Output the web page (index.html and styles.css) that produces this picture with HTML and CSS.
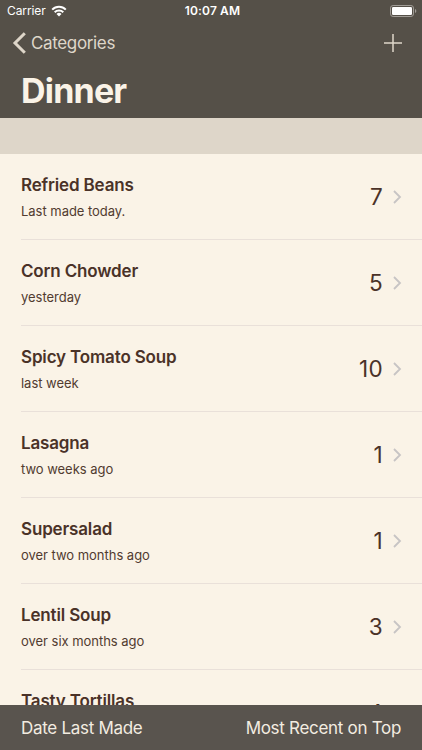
FILE: index.html
```
<!DOCTYPE html>
<html lang="en">
<head>
    <meta charset="UTF-8">
    <meta name="viewport" content="width=device-width, initial-scale=1.0">
    <title>Dinner</title>
    <link rel="stylesheet" href="styles.css">
</head>

<body>
    <div class="app">
        <header class="header">
            <!-- Status bar -->
            <div class="status-bar">
                <div class="carrier">
                    <span>Carrier</span>
                    <svg width="16" height="12" viewBox="0 0 16 12" fill="none" stroke="#fff" stroke-width="2">
                        <path d="M1.2 4.6a9.6 9.6 0 0 1 13.6 0"/>
                        <path d="M3.7 7.2a6.1 6.1 0 0 1 8.6 0"/>
                        <path d="M8 11.6L5.5 9.1a3.5 3.5 0 0 1 5 0z" fill="#fff" stroke="none"/>
                    </svg>
                </div>
                <div class="clock">10:07 AM</div>
                <svg class="battery" width="27" height="12" viewBox="0 0 27 12">
                    <rect x="0.5" y="0.5" width="23" height="11" rx="2.6" fill="none" stroke="#a19d97"/>
                    <rect x="2" y="2" width="20" height="8" rx="1.2" fill="#fff"/>
                    <path d="M25 4c1.8.6 1.8 3.4 0 4z" fill="#a19d97"/>
                </svg>
            </div>

            <!-- Navigation -->
            <nav class="nav-bar">
                <a class="back">
                    <svg width="14" height="22" viewBox="0 0 14 22" fill="none" stroke="#ded6c9" stroke-width="3">
                        <path d="M12.8 1.2L3 11l9.8 9.8"/>
                    </svg>
                    <span>Categories</span>
                </a>
                <svg width="18" height="18" viewBox="0 0 18 18" stroke="#ded6c9" stroke-width="1.5">
                    <path d="M9 0v18M0 9h18"/>
                </svg>
            </nav>

            <h1 class="title">Dinner</h1>
        </header>

        <div class="section-strip"></div>

        <!-- Recipes -->
        <main class="recipes">
            <div class="recipe">
                <div class="info">
                    <div class="name">Refried Beans</div>
                    <div class="made">Last made today.</div>
                </div>
                <div class="count">7</div>
                <svg class="chevron" width="9" height="14" viewBox="0 0 9 14"><path d="M1 1l6 6-6 6"/></svg>
            </div>
            <div class="recipe">
                <div class="info">
                    <div class="name">Corn Chowder</div>
                    <div class="made">yesterday</div>
                </div>
                <div class="count">5</div>
                <svg class="chevron" width="9" height="14" viewBox="0 0 9 14"><path d="M1 1l6 6-6 6"/></svg>
            </div>
            <div class="recipe">
                <div class="info">
                    <div class="name">Spicy Tomato Soup</div>
                    <div class="made">last week</div>
                </div>
                <div class="count">10</div>
                <svg class="chevron" width="9" height="14" viewBox="0 0 9 14"><path d="M1 1l6 6-6 6"/></svg>
            </div>
            <div class="recipe">
                <div class="info">
                    <div class="name">Lasagna</div>
                    <div class="made">two weeks ago</div>
                </div>
                <div class="count">1</div>
                <svg class="chevron" width="9" height="14" viewBox="0 0 9 14"><path d="M1 1l6 6-6 6"/></svg>
            </div>
            <div class="recipe">
                <div class="info">
                    <div class="name">Supersalad</div>
                    <div class="made">over two months ago</div>
                </div>
                <div class="count">1</div>
                <svg class="chevron" width="9" height="14" viewBox="0 0 9 14"><path d="M1 1l6 6-6 6"/></svg>
            </div>
            <div class="recipe">
                <div class="info">
                    <div class="name">Lentil Soup</div>
                    <div class="made">over six months ago</div>
                </div>
                <div class="count">3</div>
                <svg class="chevron" width="9" height="14" viewBox="0 0 9 14"><path d="M1 1l6 6-6 6"/></svg>
            </div>
            <!-- Runs under the toolbar -->
            <div class="recipe">
                <div class="info">
                    <div class="name">Tasty Tortillas</div>
                </div>
                <div class="count">4</div>
                <svg class="chevron" width="9" height="14" viewBox="0 0 9 14"><path d="M1 1l6 6-6 6"/></svg>
            </div>
        </main>

        <!-- Sort options -->
        <footer class="toolbar">
            <span>Date Last Made</span>
            <span>Most Recent on Top</span>
        </footer>
    </div>
</body>
</html>
```
FILE: styles.css
```
* {
    box-sizing: border-box;
}

body {
    margin: 0;
    font-family: Inter, "Liberation Sans", sans-serif;
    background: #faf3e7;
    color: #4a3228;
}

svg {
    display: block;
    flex-shrink: 0;
}

.app {
    display: flex;
    flex-direction: column;
    height: 750px;
    overflow: hidden;
}

/* Header */
.header {
    height: 118px;
    flex-shrink: 0;
    background: #555048;
}

.status-bar {
    display: grid;
    grid-template-columns: 1fr auto 1fr;
    align-items: center;
    height: 21px;
    padding: 0 5px 0 7px;
    color: #fff;
    font-size: 12px;
}

.carrier {
    display: flex;
    align-items: center;
    gap: 5px;
    letter-spacing: -0.1px;
}

.clock {
    padding-left: 1px;
    font-weight: 600;
    letter-spacing: 0.15px;
}

.battery {
    justify-self: end;
}

.nav-bar {
    display: flex;
    justify-content: space-between;
    align-items: center;
    height: 44px;
    padding: 0 20px 0 12px;
}

.back {
    display: flex;
    align-items: center;
    gap: 5px;
    color: #ded6c9;
    font-size: 17px;
    letter-spacing: -0.35px;
}

.title {
    margin: 5px 21px 0;
    color: #faf3e7;
    font-size: 34px;
    line-height: 42px;
    font-weight: 700;
    letter-spacing: -0.8px;
}

.section-strip {
    height: 36px;
    flex-shrink: 0;
    background: #ded6c9;
}

/* Recipe list */
.recipes {
    flex: 1;
    min-height: 0;
    overflow: hidden;
}

.recipe {
    display: flex;
    align-items: center;
    height: 86px;
    margin-left: 21px;
    padding-right: 20px;
    border-bottom: 1px solid #e9e0d9;
}

.info {
    flex: 1;
    align-self: flex-start;
    padding-top: 20px;
}

.name {
    font-size: 17px;
    line-height: 22px;
    font-weight: 600;
    letter-spacing: -0.16px;
}

.made {
    margin-top: 6px;
    font-size: 13px;
    line-height: 18px;
    letter-spacing: -0.03px;
    color: #513b30;
}

.count {
    margin-right: 10px;
    font-size: 22.5px;
    line-height: 28px;
    letter-spacing: 0.3px;
}

.chevron {
    fill: none;
    stroke: #c7c4c4;
    stroke-width: 1.8;
}

/* Bottom toolbar */
.toolbar {
    display: flex;
    justify-content: space-between;
    align-items: center;
    height: 45px;
    flex-shrink: 0;
    padding: 0 21px;
    background: #59544e;
    color: #f3ece1;
    font-size: 17px;
    letter-spacing: -0.3px;
}
```
